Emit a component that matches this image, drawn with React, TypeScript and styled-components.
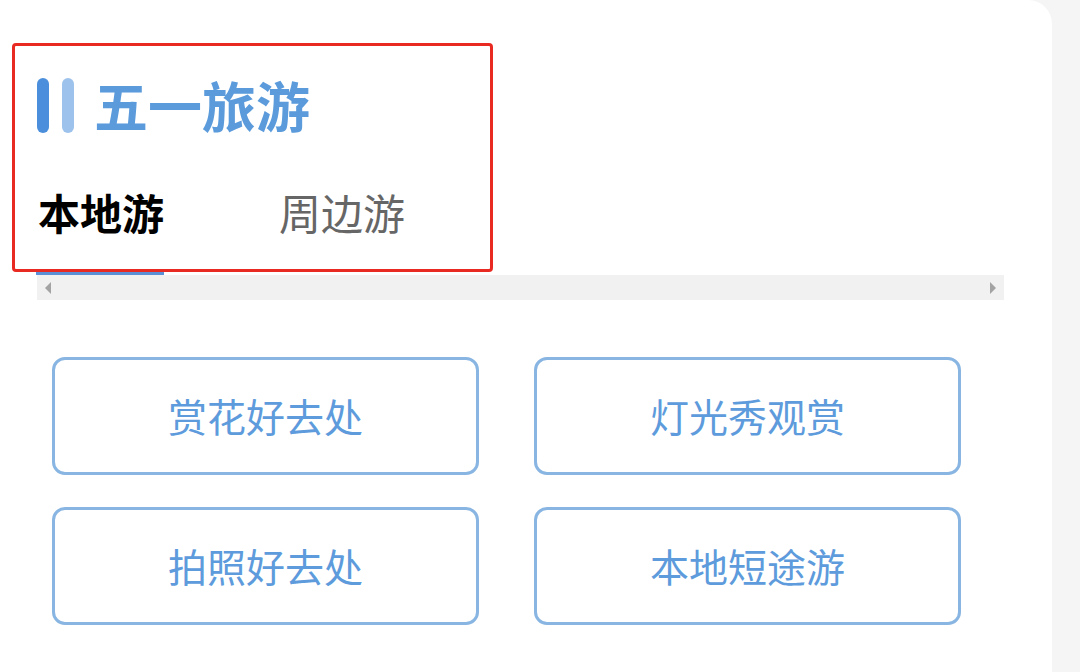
import * as React from 'react';
import styled, { createGlobalStyle } from 'styled-components';

const GlobalStyle = createGlobalStyle`
	html, body {
		margin: 0;
		padding: 0;
		background-color: #f5f5f5;
		font-family: 'Noto Sans CJK SC', 'Noto Sans', sans-serif;
	}
`;

const Page = styled.div`
	width: 1080px;
	height: 672px;
	overflow: hidden;
	background-color: #f5f5f5;
`;

const Card = styled.div`
	position: relative;
	width: 1052px;
	height: 672px;
	background-color: #ffffff;
	border-top-right-radius: 24px;
	padding-left: 37px;
	box-sizing: border-box;
`;

const Header = styled.div`
	display: flex;
	align-items: center;
	height: 55px;
	padding-top: 78px;
`;

const Bars = styled.div`
	display: flex;
	gap: 13px;
	height: 55px;
	margin-right: 20px;
`;

const Bar = styled.span<{ $light?: boolean }>`
	display: block;
	width: 12px;
	height: 100%;
	border-radius: 6px;
	background-color: ${(p) => (p.$light ? '#9dc3ec' : '#4b8edb')};
`;

const Title = styled.h1`
	margin: 0 0 2px;
	font-size: 54px;
	line-height: 55px;
	font-weight: 700;
	color: #5b9bdb;
`;

const TabBar = styled.div`
	display: flex;
	margin-top: 54px;
	margin-left: 1px;
`;

const Tab = styled.div<{ $active?: boolean }>`
	height: 50px;
	line-height: 50px;
	padding-bottom: 35px;
	margin-right: 115px;
	font-size: 42px;
	font-weight: ${(p) => (p.$active ? 700 : 400)};
	color: ${(p) => (p.$active ? '#000000' : '#666666')};
	border-bottom: 3px solid ${(p) => (p.$active ? '#5b8fd6' : 'transparent')};
	margin-left: ${(p) => (p.$active ? '-2px' : '0')};
	padding-left: ${(p) => (p.$active ? '2px' : '0')};
`;

const ScrollTrack = styled.div`
	display: flex;
	align-items: center;
	justify-content: space-between;
	width: 967px;
	height: 25px;
	padding: 0 8px;
	box-sizing: border-box;
	background-color: #f1f1f1;
`;

const Arrow = styled.span<{ $dir: 'left' | 'right' }>`
	width: 0;
	height: 0;
	border-top: 6px solid transparent;
	border-bottom: 6px solid transparent;
	${(p) =>
		p.$dir === 'left'
			? 'border-right: 6px solid #a3a3a3;'
			: 'border-left: 6px solid #a3a3a3;'}
`;

const Grid = styled.div`
	display: grid;
	grid-template-columns: 427px 427px;
	grid-auto-rows: 118px;
	column-gap: 55px;
	row-gap: 32px;
	margin-top: 57px;
	margin-left: 15px;
`;

const Entry = styled.button`
	display: flex;
	align-items: center;
	justify-content: center;
	background-color: #ffffff;
	border: 3px solid #89b5e2;
	border-radius: 13px;
	font-family: inherit;
	font-size: 39px;
	color: #5d9bdc;
	padding: 0 0 2px;
	cursor: pointer;
`;

const Highlight = styled.div`
	position: absolute;
	left: 12px;
	top: 43px;
	width: 481px;
	height: 229px;
	box-sizing: border-box;
	border: 3px solid #e82a22;
	border-radius: 4px;
	pointer-events: none;
`;

const entries = ['赏花好去处', '灯光秀观赏', '拍照好去处', '本地短途游'];

const App: React.FC = () => {
	const [active, setActive] = React.useState(0);

	return (
		<Page>
			<GlobalStyle />
			<Card>
				<Header>
					<Bars>
						<Bar />
						<Bar $light />
					</Bars>
					<Title>五一旅游</Title>
				</Header>
				<TabBar>
					{['本地游', '周边游'].map((t, i) => (
						<Tab key={t} $active={active === i} onClick={() => setActive(i)}>
							{t}
						</Tab>
					))}
				</TabBar>
				<ScrollTrack>
					<Arrow $dir='left' />
					<Arrow $dir='right' />
				</ScrollTrack>
				<Grid>
					{entries.map((e) => (
						<Entry key={e}>{e}</Entry>
					))}
				</Grid>
				<Highlight />
			</Card>
		</Page>
	);
};

export default App;
